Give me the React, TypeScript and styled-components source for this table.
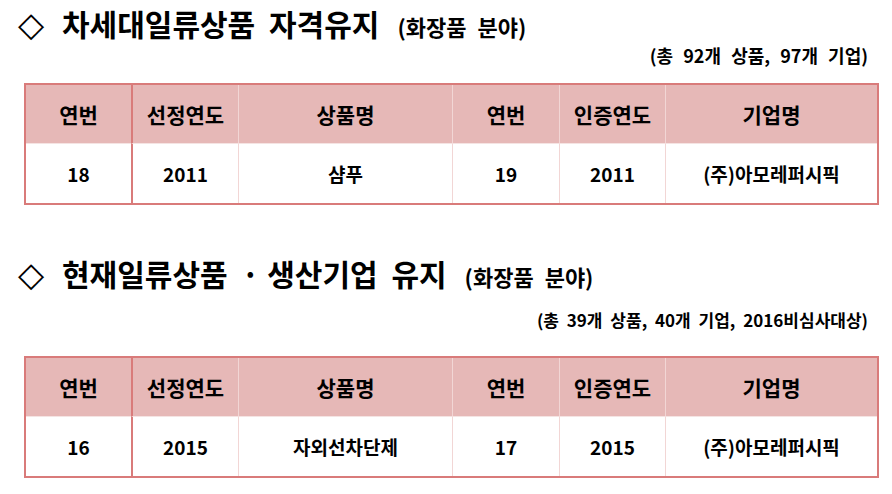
import React from 'react';
import styled, { createGlobalStyle } from 'styled-components';

const GlobalStyle = createGlobalStyle`
  html, body {
    margin: 0;
    padding: 0;
    background: #fff;
  }

  body {
    font-family: "Noto Sans CJK KR", "Noto Sans", sans-serif;
    color: #000;
  }
`;

const Page = styled.div`
  width: 892px;
  height: 494px;
  padding: 0 13px 0 24px;
  box-sizing: border-box;
  overflow: hidden;
`;

const Section = styled.section<{ $gap: number }>`
  display: flex;
  flex-direction: column;
  margin-top: ${({ $gap }) => $gap}px;
`;

const TitleRow = styled.h2`
  display: flex;
  align-items: baseline;
  margin: 0 0 0 -6px;
  height: 40px;
  font-size: 30px;
  font-weight: 700;
  line-height: 40px;
  white-space: nowrap;
`;

const Diamond = styled.span`
  width: 44px;
  font-family: "DejaVu Sans", sans-serif;
  font-size: 34px;
  font-weight: 400;
`;

const TitleText = styled.span`
  word-spacing: 7px;
`;

const Dot = styled.span`
  margin-right: 8px;
`;

const Field = styled.span`
  margin-left: 18px;
  font-size: 22px;
  word-spacing: 6px;
`;

const Note = styled.p<{ $gap: number; $size: number }>`
  margin: ${({ $gap }) => $gap}px 0 0;
  height: 24px;
  padding-right: 11px;
  font-size: ${({ $size }) => $size}px;
  font-weight: 700;
  line-height: 24px;
  text-align: right;
  word-spacing: ${({ $size }) => ($size > 17 ? 6 : 4)}px;
  white-space: nowrap;
`;

const Table = styled.div<{ $gap: number }>`
  display: grid;
  grid-template-columns: 105px 107px 214px 107px 106px 212px;
  width: 855px;
  margin-top: ${({ $gap }) => $gap}px;
  border: 2px solid #d97b7a;
  box-sizing: border-box;
`;

const Cell = styled.div<{ $head?: boolean; $strong?: boolean }>`
  display: flex;
  align-items: center;
  justify-content: center;
  height: ${({ $head }) => ($head ? 58 : 59)}px;
  background: ${({ $head }) => ($head ? '#e6b8b7' : '#fff')};
  border-bottom: ${({ $head }) => ($head ? '1px solid #f5e4e3' : 'none')};
  border-left: ${({ $strong }) => ($strong ? '2px solid #d97b7a' : '1px solid #f2d6d5')};
  font-size: ${({ $head }) => ($head ? 21 : 19)}px;
  font-weight: 700;
  white-space: nowrap;

  &:first-child,
  &:nth-child(7) {
    border-left: none;
  }
`;

const headers = ['연번', '선정연도', '상품명', '연번', '인증연도', '기업명'];

interface SectionData {
  key: string;
  title: React.ReactNode;
  field: string;
  note: string;
  noteSize: number;
  row: string[];
  gaps: [number, number, number];
}

const sections: SectionData[] = [
  {
    key: 'next',
    title: '차세대일류상품 자격유지',
    field: '(화장품 분야)',
    note: '(총 92개 상품, 97개 기업)',
    noteSize: 18,
    row: ['18', '2011', '샴푸', '19', '2011', '(주)아모레퍼시픽'],
    gaps: [3, 0, 16],
  },
  {
    key: 'current',
    title: (
      <>
        현재일류상품 <Dot>·</Dot>생산기업 유지
      </>
    ),
    field: '(화장품 분야)',
    note: '(총 39개 상품, 40개 기업, 2016비심사대상)',
    noteSize: 17,
    row: ['16', '2015', '자외선차단제', '17', '2015', '(주)아모레퍼시픽'],
    gaps: [48, 15, 24],
  },
];

export default function App() {
  return (
    <>
      <GlobalStyle />
      <Page>
        {sections.map((section) => (
          <Section key={section.key} $gap={section.gaps[0]}>
            <TitleRow>
              <Diamond>◇</Diamond>
              <TitleText>{section.title}</TitleText>
              <Field>{section.field}</Field>
            </TitleRow>
            <Note $gap={section.gaps[1]} $size={section.noteSize}>
              {section.note}
            </Note>
            <Table $gap={section.gaps[2]}>
              {headers.map((h, c) => (
                <Cell key={`h${c}`} $head $strong={c === 1}>
                  {h}
                </Cell>
              ))}
              {section.row.map((v, c) => (
                <Cell key={`r${c}`} $strong={c === 1}>
                  {v}
                </Cell>
              ))}
            </Table>
          </Section>
        ))}
      </Page>
    </>
  );
}
